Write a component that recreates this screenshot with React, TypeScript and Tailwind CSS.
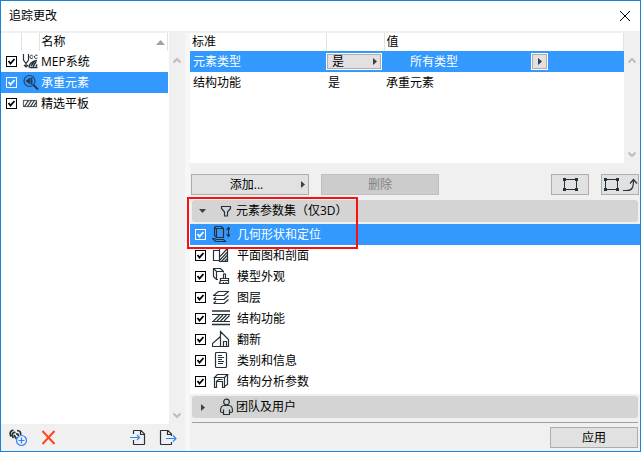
import React from 'react';

type IconProps = { children: React.ReactNode };

function Icon({ children }: IconProps) {
  return (
    <svg viewBox="0 0 18 19" className="h-[19px] w-[18px] shrink-0" fill="none" stroke="#26323a" strokeWidth="1.200" aria-hidden="true">
      {children}
    </svg>
  );
}

const MepIcon = () => (
  <Icon>
    <path d="M2.500 2v6l2.500 3.500L7.500 8V2M5 11v4M3 13l2 2 2-2" />
    <path d="M12 4.500c-1-2-3-1.500-3 .5s2 2 3 .5M16.500 3.500c-1.500-1-3 0-3 1.500s1.500 2 3 1" strokeWidth="1" />
    <path d="M8 15.500c0-4 3-6 8-7M8.500 15.500h8M10 14l3-4M12 14.500l3-4.500M15 14.500l1-2" strokeWidth="1.400" />
  </Icon>
);
const MagnifierIcon = () => (
  <Icon>
    <circle cx="8.500" cy="8" r="5.500" stroke="#1f4468" strokeWidth="1.200" />
    <path d="M12.500 12l4.500 4.500" strokeWidth="2" stroke="#1f3a55" />
    <path d="M4.500 8l4.500-3.500v7z" fill="#1f3a55" stroke="none" />
    <path d="M10.500 4.500v7" stroke="#1f3a55" strokeWidth="2" />
  </Icon>
);
const PlateIcon = () => (
  <Icon>
    <rect x="2.500" y="6.500" width="13" height="6" stroke="#60666a" />
    <path d="M3.500 12.500l4-6M6.500 12.500l4-6M9.500 12.500l4-6M12.500 12.500l3-4.500" />
  </Icon>
);
const GeometryIcon = () => (
  <Icon>
    <path d="M2.500 2.500l1-1h6l2 2v9h-7l-2-2zM2.500 2.500l2 1.500v8.500M4.500 3.500h7" />
    <path d="M2.500 13.500h-2l3 3h10l-2-2H5z" />
    <path d="M16.500 2.500v9M14.500 5l2-2.500 2 2.500M14.500 9l2 2.500 2-2.500" />
  </Icon>
);
const PlanIcon = () => (
  <Icon>
    <path d="M7.500 4.500h-6v10h6M7.500 2.500h8v13h-8z" />
    <path d="M8 10.500l7.500-8M8 14l7.500-8M9.500 15.500l6-6.500M12.500 15.500l3-3" />
  </Icon>
);
const ModelIcon = () => (
  <Icon>
    <path d="M6 12.500H4.500l-3-3v-8h7l3 3v1M1.500 1.500l3 3h7M4.500 4.500v8" />
    <path d="M11.500 11V7.500c0-1 2-1 2 0V11M8.500 11.500h8v2h-8zM8.500 13.500l-1 3h9v-3M11.500 16.500V15M14 16.500V15" />
  </Icon>
);
const LayersIcon = () => (
  <Icon>
    <path d="M6.500 3.500h10l-4.500 4H1.500zM1.500 11.500H12l4.500-4M1.500 11.500L4 9M1.500 15.500H12l4.500-4M1.500 15.500L4 13" strokeLinejoin="round" />
  </Icon>
);
const StructureIcon = () => (
  <Icon>
    <path d="M0 2h18M0 15.500h18" strokeWidth="1.600" />
    <path d="M0 5.500h18M0 12.500h18M1.500 12l6-6M5 12l6-6M8.500 12l6-6M12 12l5.500-5.500" />
  </Icon>
);
const HouseIcon = () => (
  <Icon>
    <path d="M8.500 16.500V1.500l8 8v7H.5v-3l8-7M11.500 16.500v-5h3v5" />
  </Icon>
);
const DocumentIcon = () => (
  <Icon>
    <rect x="3.500" y="1.500" width="11" height="15" rx="1" />
    <path d="M6 4.500h4M6 6.500h6M6 8.500h4M6 10.500h6M6 12.500h5" strokeWidth="1" />
  </Icon>
);
const AnalysisIcon = () => (
  <Icon>
    <path d="M2.500 5.500l3-3h10l-3 3zM2.500 5.500v10h2v-6h6v6h2v-10M15.500 2.500v10l-3 2M4.500 9.500l2-2h4" />
  </Icon>
);

function Tick({ label, selected = false }: { label: string; selected?: boolean }) {
  const color = selected ? 'border-white bg-[#3399ff]' : 'border-black bg-white';
  return (
    <span className="grid h-[11px] w-[11px] shrink-0">
      <input type="checkbox" defaultChecked aria-label={label} className={`peer col-start-1 row-start-1 h-[11px] w-[11px] appearance-none border ${color}`} />
      <svg viewBox="0 0 11 11" className="pointer-events-none invisible z-10 col-start-1 row-start-1 h-[11px] w-[11px] peer-checked:visible" fill="none" stroke={selected ? '#fff' : '#000'} strokeWidth="1.800" aria-hidden="true">
        <path d="M2.500 5l2 2.500 4-4.500" />
      </svg>
    </span>
  );
}

function Scrollbar() {
  return (
    <div className="flex w-4 shrink-0 flex-col items-center justify-between bg-[#f0f0f0] pt-[23px] pb-1" aria-hidden="true">
      <svg className="h-2 w-2" viewBox="0 0 8 8" fill="none" stroke="#bdbdbd" strokeWidth="2"><path d="M.5 6.500L4 3l3.500 3.500" /></svg>
      <svg className="h-2 w-2" viewBox="0 0 8 8" fill="none" stroke="#bdbdbd" strokeWidth="2"><path d="M.5 1.500L4 5l3.500-3.500" /></svg>
    </div>
  );
}

const Arrow = () => (
  <svg className="h-[7px] w-1 shrink-0" viewBox="0 0 4 7" fill="#404040" aria-hidden="true"><path d="M0 0l4 3.500L0 7z" /></svg>
);

function Marquee() {
  return (
    <svg className="h-[15px] w-4 shrink-0" viewBox="0 0 16 15" fill="#26323a" aria-hidden="true">
      <path d="M2.500 2.500h12v10h-12z" fill="none" stroke="#26323a" />
      <path d="M1 1h3v3H1zM13 1h3v3h-3zM1 11h3v3H1zM13 11h3v3h-3z" />
    </svg>
  );
}

const favourites = [
  { name: 'MEP系统', icon: <MepIcon /> },
  { name: '承重元素', icon: <MagnifierIcon />, selected: true },
  { name: '精选平板', icon: <PlateIcon /> },
];

const parameters = [
  { name: '几何形状和定位', icon: <GeometryIcon />, selected: true },
  { name: '平面图和剖面', icon: <PlanIcon /> },
  { name: '模型外观', icon: <ModelIcon /> },
  { name: '图层', icon: <LayersIcon /> },
  { name: '结构功能', icon: <StructureIcon /> },
  { name: '翻新', icon: <HouseIcon /> },
  { name: '类别和信息', icon: <DocumentIcon /> },
  { name: '结构分析参数', icon: <AnalysisIcon /> },
];

const button = 'flex h-[21px] items-center border border-[#adadad] bg-[#e1e1e1]';

export default function App() {
  return (
    <main className="flex min-h-screen flex-col border border-[#1883d7] bg-[#f0f0f0] font-['Open_Sans','Noto_Sans_CJK_SC',sans-serif] text-xs leading-4 text-black">
      <header className="flex h-[30px] shrink-0 items-center justify-between bg-white pr-[9px] pl-2">
        <h1>追踪更改</h1>
        <button aria-label="关闭">
          <svg className="h-3 w-3" viewBox="0 0 12 12" stroke="#000" aria-hidden="true"><path d="M1 1l10 10M11 1L1 11" /></svg>
        </button>
      </header>

      <div className="flex grow pt-0.5">
        <aside className="flex w-[184px] shrink-0 flex-col">
          <div className="flex grow bg-white">
            <div className="min-w-0 grow">
              <table className="w-[167px] table-fixed border-collapse text-left">
                <colgroup><col className="w-5" /><col className="w-[18px]" /><col /></colgroup>
                <thead>
                  <tr className="h-[18px]">
                    <th className="border-r border-[#e2e2e2] p-0" />
                    <th className="border-r border-[#e2e2e2] p-0" />
                    <th className="border-r border-[#e2e2e2] p-0 font-normal">
                      <div className="flex items-center justify-between pr-0.5 pl-0.5">
                        名称
                        <svg className="h-[5px] w-[9px]" viewBox="0 0 9 5" fill="#a0a0a0" aria-hidden="true"><path d="M0 5l4.500-5L9 5z" /></svg>
                      </div>
                    </th>
                  </tr>
                </thead>
                <tbody>
                  {favourites.map((row) => (
                    <tr key={row.name} className={`h-[21px] ${row.selected ? 'bg-[#3399ff] text-white' : ''}`}>
                      <td className="p-0 pl-[5px]"><Tick label={row.name} selected={row.selected} /></td>
                      <td className="p-0">{row.icon}</td>
                      <td className="p-0 pl-[2px]">{row.name}</td>
                    </tr>
                  ))}
                </tbody>
              </table>
            </div>
            <Scrollbar />
          </div>
          <div className="flex h-[27px] shrink-0 items-center pr-2 pl-2">
            <button aria-label="新建">
              <Icon>
                <path d="M2 8.500C0 5 2 2 4.500 2.500M4.500 10C2 7 3.500 4 6.500 4.500M8 2.500c3 0 4 2 3.500 4.500M7 6c2-.5 2.500.5 2 2M5 7l2.500 4" strokeWidth="1.700" />
                <circle cx="12.500" cy="12.500" r="5" fill="#f0f0f0" stroke="#3385ff" />
                <path d="M9.500 12.500h6M12.500 9.500v6" stroke="#3385ff" />
              </Icon>
            </button>
            <button className="ml-3.5" aria-label="删除规则">
              <svg className="h-[15px] w-[15px]" viewBox="0 0 15 15" stroke="#ff4522" strokeWidth="2" aria-hidden="true"><path d="M1.500 1l12 13M13.500 1l-12 13" /></svg>
            </button>
            <button className="ml-auto" aria-label="导入">
              <Icon>
                <path d="M4.500 6V3q0-.5.5-.5h7l3.500 3.500v10q0 .5-.5.500H5q-.5 0-.5-.5v-4M11.500 2.500v4h4" />
                <path d="M1 9.500h9.500M8 7l2.500 2.500L8 12" stroke="#3385ff" />
              </Icon>
            </button>
            <button className="ml-3" aria-label="导出">
              <Icon>
                <path d="M12.500 8V6L9 2.500H2q-.5 0-.5.5v13q0 .5.5.500h10q.5 0 .5-.5v-2M8.500 2.500v4h4" />
                <path d="M7 10.500h10M14 7.500l3 3-3 3" stroke="#3385ff" />
              </Icon>
            </button>
          </div>
        </aside>

        <div className="w-[5px] shrink-0 bg-[#f7f7f7]" />

        <section className="flex min-w-0 grow flex-col">
          <div className="flex h-[130px] shrink-0 bg-white">
            <div className="min-w-0 grow">
              <table className="w-full table-fixed border-collapse text-left">
                <colgroup><col className="w-[136px]" /><col className="w-[58px]" /><col /></colgroup>
                <thead>
                  <tr className="h-[18px]">
                    <th className="border-r border-[#e2e2e2] p-0 pl-0.5 font-normal">标准</th>
                    <th className="border-r border-[#e2e2e2] p-0" />
                    <th className="border-r border-[#e2e2e2] p-0 pl-0.5 font-normal">值</th>
                  </tr>
                </thead>
                <tbody>
                  <tr className="h-[21px] bg-[#3399ff] text-white">
                    <td className="p-0 pl-[3px]">元素类型</td>
                    <td className="p-0 pl-px">
                      <button className="flex h-[15px] w-[54px] items-center justify-between border border-[#adadad] bg-[#e1e1e1] pr-[3px] pl-1 text-black outline outline-white">
                        是<Arrow />
                      </button>
                    </td>
                    <td className="p-0">
                      <div className="flex items-center pl-[26px]">
                        <span className="w-[122px]">所有类型</span>
                        <button aria-label="选择类型" className="flex h-[15px] w-[15px] items-center justify-center border border-[#adadad] bg-[#e1e1e1] outline outline-white"><Arrow /></button>
                      </div>
                    </td>
                  </tr>
                  <tr className="h-[21px]">
                    <td className="p-0 pl-[3px]">结构功能</td>
                    <td className="p-0 pl-0.5">是</td>
                    <td className="p-0 pl-0.5">承重元素</td>
                  </tr>
                </tbody>
              </table>
            </div>
            <Scrollbar />
          </div>

          <div className="flex h-8 shrink-0 items-end pr-px pl-px">
            <button className={`${button} w-[118px] justify-between pr-[3px]`}>
              <span className="grow text-center">添加...</span><Arrow />
            </button>
            <button disabled className="ml-3 flex h-[21px] w-[118px] items-center justify-center border border-[#bfbfbf] bg-[#cccccc] text-[#838383]">删除</button>
            <button aria-label="选择元素" className={`${button} ml-auto w-[38px] justify-center`}><Marquee /></button>
            <button aria-label="选择并转到" className={`${button} ml-3 w-[38px] justify-between pl-px`}>
              <Marquee />
              <svg className="h-[15px] w-4" viewBox="0 0 16 15" fill="none" stroke="#26323a" strokeWidth="1.200" aria-hidden="true"><path d="M1 13.500h4c5 0 6.500-3 6.500-10M8 6.500l3.500-4 3.500 4" /></svg>
            </button>
          </div>

          <div className="relative mt-[5px]">
            <button className="mr-0.5 ml-0.5 flex h-[22px] w-[calc(100%-4px)] items-center rounded-[3px] bg-[#d4d4d4] pl-[7px] text-left">
              <svg className="h-1 w-[7px]" viewBox="0 0 7 4" fill="#404040" aria-hidden="true"><path d="M0 0h7L3.500 4z" /></svg>
              <svg className="ml-3.5 h-3.5 w-3" viewBox="0 0 12 14" fill="none" stroke="#26323a" strokeWidth="1.200" aria-hidden="true"><path d="M1.500 2.500h9v2l-3 3.500v4h-3V8l-3-3.500z" /></svg>
              <span className="ml-1">元素参数集（仅3D）</span>
            </button>
            <ul className="mt-0.5 bg-white pb-0.5">
              {parameters.map((row) => (
                <li key={row.name} className={`flex h-[21px] items-center pl-[5px] ${row.selected ? 'bg-[#3399ff] text-white' : ''}`}>
                  <Tick label={row.name} selected={row.selected} />
                  <span className="mr-[7px] ml-1.5">{row.icon}</span>
                  {row.name}
                </li>
              ))}
            </ul>
            <div className="pointer-events-none absolute -top-[3px] -left-[3px] h-[52px] w-[171px] border-2 border-[#fb1010]" />
          </div>

          <div className="mt-0.5 pr-0.5 pl-0.5">
            <button className="flex h-[22px] w-full items-center rounded-[3px] bg-[#d4d4d4] pl-[9px] text-left">
              <Arrow />
              <svg className="ml-3.5 h-[18px] w-[15px]" viewBox="0 0 15 18" fill="none" stroke="#26323a" strokeWidth="1.200" aria-hidden="true">
                <circle cx="7.500" cy="4" r="2.800" />
                <path d="M4.500 16.500v-2H3c-1 0-1.500-.5-1.500-1.500 0-3 1-5.500 3.500-5.500h5c2.500 0 3.500 2.500 3.500 5.500 0 1-.5 1.500-1.500 1.500h-1.500v2zM4.500 14.500v-3M10.500 14.500v-3" />
              </svg>
              <span className="ml-0.5">团队及用户</span>
            </button>
            <div className="mt-1 border-t border-[#a0a0a0]" />
            <button className={`${button} mt-1 ml-auto w-[88px] justify-center`}>应用</button>
          </div>
        </section>
      </div>
    </main>
  );
}
